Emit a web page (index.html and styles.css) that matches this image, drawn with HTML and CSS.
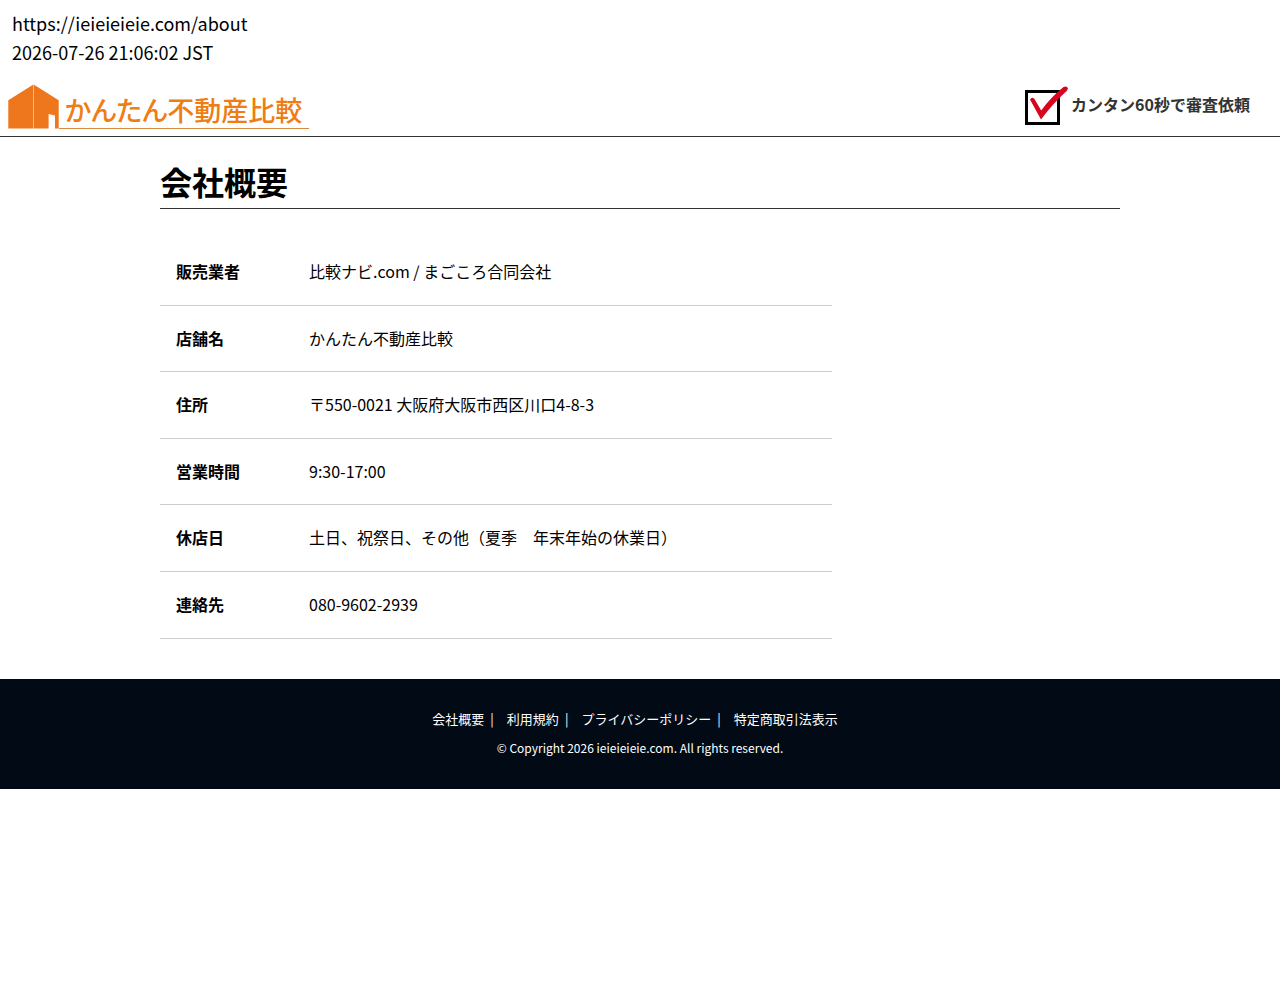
FILE: index.html
```html
<!DOCTYPE html>
<html lang="ja">
<head>
<meta charset="utf-8">
<meta name="viewport" content="width=device-width, initial-scale=1">
<title>会社概要 | かんたん不動産比較</title>
<link rel="stylesheet" href="styles.css">
</head>
<body>
<div class="capture-info">
<p>https://ieieieieie.com/about</p>
<p>2026-07-26 21:06:02 JST</p>
</div>
<header class="site-header">
<a class="logo" href="#">
<svg class="logo-icon" viewBox="0 0 51 45" aria-hidden="true"><path fill="#ee761c" d="M.3 16.3 25 .8V44.6H.3ZM26 .8 50.7 16.3V44.6H47V31.6L40.6 30V44.6H26Z"/><path fill="#f6b98a" d="M25 .8h1v43.8h-1z"/></svg>
<span class="logo-text">かんたん不動産比較</span>
</a>
<a class="apply" href="#">
<svg class="apply-icon" viewBox="0 0 44 42" aria-hidden="true"><rect x="2.5" y="7.5" width="32" height="32" fill="none" stroke="#000" stroke-width="3"/><path d="M6 15.500Q8 12.500 10.500 15L17.200 26.500Q26 14 39.500 3Q43 1.500 44 4.500Q43.500 6.500 41 8.500Q29 19.500 17 35.500Z" fill="#d7051d"/></svg>
<span>カンタン60秒で審査依頼</span>
</a>
</header>
<main class="content">
<h1 class="page-title">会社概要</h1>
<table class="company">
<tr><th scope="row">販売業者</th><td>比較ナビ.com / まごころ合同会社</td></tr>
<tr><th scope="row">店舗名</th><td>かんたん不動産比較</td></tr>
<tr><th scope="row">住所</th><td>〒550-0021 大阪府大阪市西区川口4-8-3</td></tr>
<tr><th scope="row">営業時間</th><td>9:30-17:00</td></tr>
<tr><th scope="row">休店日</th><td>土日、祝祭日、その他（夏季　年末年始の休業日）</td></tr>
<tr><th scope="row">連絡先</th><td>080-9602-2939</td></tr>
</table>
</main>
<footer class="site-footer">
<ul class="footer-nav">
<li><a href="#">会社概要</a><span class="bar">|</span></li>
<li><a href="#">利用規約</a><span class="bar">|</span></li>
<li><a href="#">プライバシーポリシー</a><span class="bar">|</span></li>
<li><a href="#">特定商取引法表示</a></li>
</ul>
<p class="copyright">© Copyright 2026 ieieieieie.com. All rights reserved.</p>
</footer>
</body>
</html>
```
FILE: styles.css
```css
* { box-sizing: border-box; margin: 0; padding: 0; }
body { background: #fff; color: #000; font: 16px/24px "Noto Sans CJK JP", sans-serif; }
a { color: inherit; text-decoration: none; }
.capture-info { padding: 9px 12px 8px; font-size: 18px; line-height: 29px; }
.site-header { display: flex; justify-content: space-between; align-items: flex-start; padding: 9px 30px 7px 8px; border-bottom: 1px solid #333; }
.logo { display: flex; color: #ee7d14; }
.logo-icon { width: 51px; height: 45px; }
.logo-text { padding: 8px 7px 0 6px; border-bottom: 1px solid #d98a3c; font-size: 27px; line-height: 36px; font-weight: 500; font-feature-settings: "palt"; }
.apply { display: flex; gap: 3px; color: #333; font-weight: 700; line-height: 40px; }
.apply-icon { width: 44px; height: 42px; }
.content { max-width: 960px; margin: 0 auto; padding: 22px 0 40px; }
.page-title { padding-bottom: 4px; font-size: 32px; line-height: 45px; border-bottom: 1px solid #333; margin-bottom: 30px; }
.company { width: 70%; border-collapse: collapse; line-height: 1.6; }
.company th, .company td { padding: 20px 16px; border-bottom: 1px solid #ccc; text-align: left; }
.company th { width: 133px; }
.site-footer { padding: 28px 0 29px; background: #010a15; color: #fff; text-align: center; font-size: 13px; }
.footer-nav { display: flex; justify-content: center; gap: 13px; padding: 0 10px 5px 0; list-style: none; }
.bar { margin-left: 6px; }
.copyright { font-size: 12px; }
```
